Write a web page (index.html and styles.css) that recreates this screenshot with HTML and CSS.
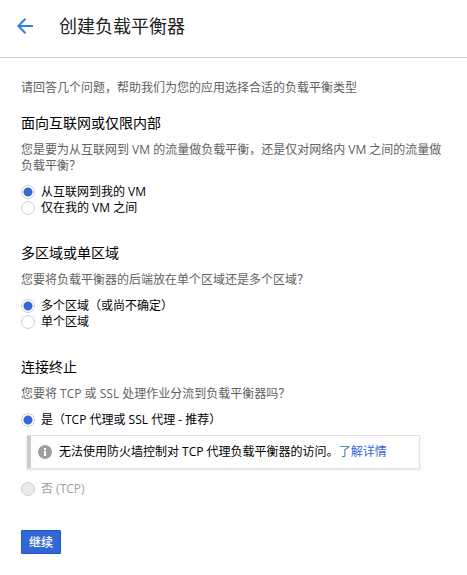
FILE: index.html
```html
<!DOCTYPE html>
<html lang="zh-CN">
<head>
<meta charset="utf-8">
<meta name="viewport" content="width=device-width, initial-scale=1">
<title>创建负载平衡器</title>
<link rel="stylesheet" href="styles.css">
</head>
<body>
<header class="header">
  <a class="back" href="#" aria-label="返回">
    <svg width="16" height="16" viewBox="0 0 16 16" fill="none" stroke="currentColor" stroke-width="2" aria-hidden="true"><path d="M16 8H1.5M8.5 .8 1.4 8l7.1 7.2"/></svg>
  </a>
  <h1 class="title">创建负载平衡器</h1>
</header>
<main class="content">
  <p class="text">请回答几个问题，帮助我们为您的应用选择合适的负载平衡类型</p>
  <form class="form">
    <section class="section" role="radiogroup" aria-labelledby="facing">
      <h2 class="heading" id="facing">面向互联网或仅限内部</h2>
      <p class="text">您是要为从互联网到 VM 的流量做负载平衡，还是仅对网络内 VM 之间的流量做负载平衡？</p>
      <div class="options">
        <label class="option"><input class="radio" type="radio" name="facing" checked>从互联网到我的 VM</label>
        <label class="option"><input class="radio" type="radio" name="facing">仅在我的 VM 之间</label>
      </div>
    </section>
    <section class="section" role="radiogroup" aria-labelledby="region">
      <h2 class="heading" id="region">多区域或单区域</h2>
      <p class="text">您要将负载平衡器的后端放在单个区域还是多个区域？</p>
      <div class="options">
        <label class="option"><input class="radio" type="radio" name="region" checked>多个区域（或尚不确定）</label>
        <label class="option"><input class="radio" type="radio" name="region">单个区域</label>
      </div>
    </section>
    <section class="section" role="radiogroup" aria-labelledby="termination">
      <h2 class="heading" id="termination">连接终止</h2>
      <p class="text">您要将 TCP 或 SSL 处理作业分流到负载平衡器吗？</p>
      <div class="options">
        <label class="option"><input class="radio" type="radio" name="termination" checked>是（TCP 代理或 SSL 代理 - 推荐）</label>
        <div class="note">
          <svg class="info" width="14" height="14" viewBox="0 0 14 14" aria-hidden="true"><circle cx="7" cy="7" r="7" fill="#9e9e9e"/><path d="M6 3h2v2H6zM6 6h2v5H6z" fill="#fff"/></svg>
          <p class="note-text">无法使用防火墙控制对 TCP 代理负载平衡器的访问。<a class="link" href="#">了解详情</a></p>
        </div>
        <label class="option disabled"><input class="radio" type="radio" name="termination" disabled>否 (TCP)</label>
      </div>
    </section>
    <button class="button" type="button">继续</button>
  </form>
</main>
</body>
</html>
```
FILE: styles.css
```css
* {
  box-sizing: border-box;
}

body {
  margin: 0;
  background: #fff;
  color: #000;
  font: 12px/16px "Open Sans", "Noto Sans CJK SC", sans-serif;
}

h1, h2, p {
  margin: 0;
  font-weight: 400;
}

.header {
  display: flex;
  align-items: center;
  gap: 26px;
  padding: 12px 17px 17px;
  border-bottom: 1px solid #d0d0d0;
}

.back {
  display: flex;
  color: #3b78e7;
}

.title {
  color: #212121;
  font-size: 18px;
  line-height: 28px;
}

.content {
  padding: 22px 20px 20px 21px;
}

.text {
  color: #616161;
}

.form {
  display: flex;
  flex-direction: column;
  align-items: flex-start;
  gap: 27px;
  margin-top: 17px;
}

.heading {
  margin-bottom: 9px;
  font-size: 14px;
  line-height: 20px;
}

.options {
  display: flex;
  flex-direction: column;
  align-items: flex-start;
  margin-top: 10px;
}

.option {
  display: flex;
  align-items: center;
  gap: 6px;
}

.radio {
  appearance: none;
  flex: none;
  width: 14px;
  height: 14px;
  margin: 0;
  border: 1px solid #d0d0d0;
  border-radius: 50%;
  background: #fff;
}

.radio:checked {
  background: radial-gradient(circle, #3367d6 4px, #fff 5px);
}

.radio:disabled {
  background: #ebebeb;
}

.disabled {
  color: #9e9e9e;
}

.note {
  display: flex;
  align-items: center;
  gap: 7px;
  margin: 7px 0 12px 6px;
  padding: 8px 32px 8px 7px;
  border: 1px solid #e4e4e4;
  border-left: 4px solid #ccc;
  box-shadow: 0 1px 2px rgba(0, 0, 0, .12);
}

.info {
  flex: none;
}

.link {
  color: #3367d6;
  text-decoration: none;
}

.button {
  margin-top: 6px;
  padding: 4px 7px 2px;
  border: 1px solid #1a56cf;
  border-radius: 1px;
  background: #3367d6;
  color: #fff;
  font: inherit;
  font-weight: 500;
}
```
